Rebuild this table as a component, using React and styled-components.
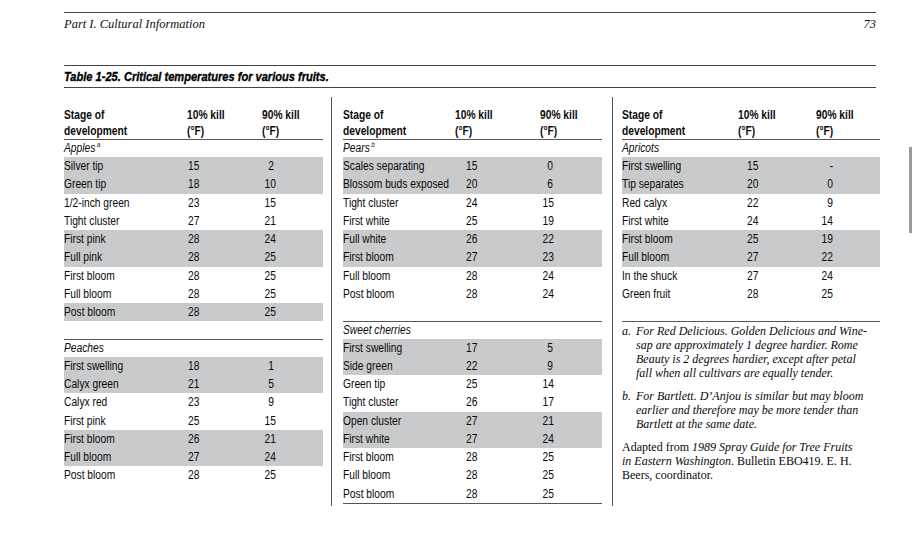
import React from "react";
import styled, { createGlobalStyle } from "styled-components";

const GlobalStyle = createGlobalStyle`
  html, body { margin: 0; padding: 0; background: #fff; }
  body { width: 912px; height: 552px; overflow: hidden; }
`;

const SANS = `"Liberation Sans", Arial, sans-serif`;
const SERIF = `"Liberation Serif", "Times New Roman", serif`;

const apples = [
  ["Silver tip", "15", "2", true],
  ["Green tip", "18", "10", true],
  ["1/2-inch green", "23", "15"],
  ["Tight cluster", "27", "21"],
  ["First pink", "28", "24", true],
  ["Full pink", "28", "25", true],
  ["First bloom", "28", "25"],
  ["Full bloom", "28", "25"],
  ["Post bloom", "28", "25", true],
];
const peaches = [
  ["First swelling", "18", "1", true],
  ["Calyx green", "21", "5", true],
  ["Calyx red", "23", "9"],
  ["First pink", "25", "15"],
  ["First bloom", "26", "21", true],
  ["Full bloom", "27", "24", true],
  ["Post bloom", "28", "25"],
];
const pears = [
  ["Scales separating", "15", "0", true],
  ["Blossom buds exposed", "20", "6", true],
  ["Tight cluster", "24", "15"],
  ["First white", "25", "19"],
  ["Full white", "26", "22", true],
  ["First bloom", "27", "23", true],
  ["Full bloom", "28", "24"],
  ["Post bloom", "28", "24"],
];
const cherries = [
  ["First swelling", "17", "5", true],
  ["Side green", "22", "9", true],
  ["Green tip", "25", "14"],
  ["Tight cluster", "26", "17"],
  ["Open cluster", "27", "21", true],
  ["First white", "27", "24", true],
  ["First bloom", "28", "25"],
  ["Full bloom", "28", "25"],
  ["Post bloom", "28", "25"],
];
const apricots = [
  ["First swelling", "15", "-", true],
  ["Tip separates", "20", "0", true],
  ["Red calyx", "22", "9"],
  ["First white", "24", "14"],
  ["First bloom", "25", "19", true],
  ["Full bloom", "27", "22", true],
  ["In the shuck", "27", "24"],
  ["Green fruit", "28", "25"],
];

const layouts = {
  left: { stage: 123, pct: 75, off10: 1, right90: 12 },
  mid: { stage: 112, pct: 85, off10: 11, right90: 13 },
  right: { stage: 116, pct: 78, off10: 9, right90: 17 },
};

const Page = styled.div`
  position: relative;
  width: 912px;
  height: 552px;
  padding: 12px 0 0 64px;
  box-sizing: border-box;
  color: #111;
`;

const RunningHead = styled.div`
  width: 812px;
  height: 53px;
  border-top: 1px solid #444;
  padding-top: 3px;
  box-sizing: border-box;
  display: flex;
  justify-content: space-between;
  font-family: ${SERIF};
  font-style: italic;
  font-size: 12.5px;
  line-height: 16px;
`;

const TableTitle = styled.div`
  width: 812px;
  border-top: 1px solid #444;
  border-bottom: 1px solid #444;
  height: 23px;
  box-sizing: border-box;
  font-family: ${SANS};
  font-weight: 700;
  font-style: italic;
  font-size: 13.5px;
  line-height: 21px;
  color: #000;
  -webkit-text-stroke: 0.35px #000;
`;

/* condensed face: Liberation Sans squeezed to Arial Narrow proportions */
const Narrow = styled.span`
  display: inline-block;
  white-space: nowrap;
  transform: scaleX(${(p) => p.$k || 0.82});
  transform-origin: ${(p) => p.$origin || "left"} center;
`;

const Columns = styled.div`
  margin-top: 9px;
  display: grid;
  grid-template-columns: 268px 281px 267px;
  width: 816px;
`;

const Column = styled.div`
  padding: 10px ${(p) => p.$pr}px 2px ${(p) => p.$pl}px;
  border-right: ${(p) => (p.$line ? "1px solid #555" : "none")};
  font-family: ${SANS};
  font-size: 12.5px;
  color: #0a0a0a;
`;

const HeadRow = styled.div`
  display: grid;
  grid-template-columns: ${(p) => p.$l.stage}px ${(p) => p.$l.pct}px 1fr;
  border-bottom: 1px solid #555;
  font-weight: 700;
  line-height: 16px;
  div { display: flex; flex-direction: column; }
`;

const GroupLabel = styled.div`
  height: 17px;
  line-height: 17px;
  font-style: italic;
  border-top: ${(p) => (p.$rule ? "1px solid #555" : "none")};
  sup {
    font-size: 7px;
    vertical-align: 5px;
    margin-left: 2px;
    line-height: 0;
  }
`;

const Spacer = styled.div`
  height: 17.5px;
`;

const Row = styled.div`
  display: grid;
  grid-template-columns: ${(p) => p.$l.stage}px ${(p) => p.$l.pct}px 1fr;
  height: 18.25px;
  line-height: 18.25px;
  background: ${(p) => (p.$shade ? "#c8cacb" : "transparent")};
`;

const Kill10 = styled.span`
  padding-left: ${(p) => p.$off}px;
`;

const Kill90 = styled.span`
  display: inline-block;
  width: ${(p) => p.$w}px;
  text-align: right;
`;

const EndRule = styled.div`
  border-top: 1px solid #555;
`;

const Notes = styled.div`
  border-top: 1px solid #555;
  padding-top: 2px;
  font-family: ${SERIF};
  font-size: 12px;
  line-height: 14px;
`;

const Note = styled.div`
  display: flex;
  font-style: italic;
  margin-bottom: 9px;
  span:first-child {
    width: 14px;
    flex: none;
  }
`;

const Source = styled.div`
  i { font-style: italic; }
`;

const ScrollThumb = styled.div`
  position: absolute;
  left: 909px;
  top: 147px;
  width: 3px;
  height: 86px;
  background: #999;
`;

function Head({ l }) {
  return (
    <HeadRow $l={l}>
      <div><Narrow>Stage of</Narrow><Narrow>development</Narrow></div>
      <div><Narrow>10% kill</Narrow><Narrow>(°F)</Narrow></div>
      <div><Narrow>90% kill</Narrow><Narrow>(°F)</Narrow></div>
    </HeadRow>
  );
}

function Rows({ data, l }) {
  return data.map(([stage, a, b, shade], i) => (
    <Row key={i} $l={l} $shade={shade}>
      <span><Narrow>{stage}</Narrow></span>
      <span><Kill10 $off={l.off10}><Narrow>{a}</Narrow></Kill10></span>
      <span><Kill90 $w={l.right90}><Narrow $origin="right">{b}</Narrow></Kill90></span>
    </Row>
  ));
}

export default function App() {
  return (
    <>
      <GlobalStyle />
      <Page>
        <RunningHead>
          <span>Part I. Cultural Information</span>
          <span>73</span>
        </RunningHead>
        <TableTitle>
          <Narrow>Table 1-25. Critical temperatures for various fruits.</Narrow>
        </TableTitle>
        <Columns>
          <Column $pl={0} $pr={8} $line>
            <Head l={layouts.left} />
            <GroupLabel><Narrow>Apples<sup>a</sup></Narrow></GroupLabel>
            <Rows data={apples} l={layouts.left} />
            <Spacer />
            <GroupLabel $rule><Narrow>Peaches</Narrow></GroupLabel>
            <Rows data={peaches} l={layouts.left} />
          </Column>
          <Column $pl={11} $pr={10} $line>
            <Head l={layouts.mid} />
            <GroupLabel><Narrow>Pears<sup>b</sup></Narrow></GroupLabel>
            <Rows data={pears} l={layouts.mid} />
            <Spacer />
            <GroupLabel $rule><Narrow>Sweet cherries</Narrow></GroupLabel>
            <Rows data={cherries} l={layouts.mid} />
            <EndRule />
          </Column>
          <Column $pl={9} $pr={0}>
            <Head l={layouts.right} />
            <GroupLabel><Narrow>Apricots</Narrow></GroupLabel>
            <Rows data={apricots} l={layouts.right} />
            <Spacer />
            <Notes>
              <Note>
                <span>a.</span>
                <span>
                  For Red Delicious. Golden Delicious and Wine-<br />
                  sap are approximately 1 degree hardier. Rome<br />
                  Beauty is 2 degrees hardier, except after petal<br />
                  fall when all cultivars are equally tender.
                </span>
              </Note>
              <Note>
                <span>b.</span>
                <span>
                  For Bartlett. D’Anjou is similar but may bloom<br />
                  earlier and therefore may be more tender than<br />
                  Bartlett at the same date.
                </span>
              </Note>
              <Source>
                Adapted from <i>1989 Spray Guide for Tree Fruits</i><br />
                <i>in Eastern Washington</i>. Bulletin EBO419. E. H.<br />
                Beers, coordinator.
              </Source>
            </Notes>
          </Column>
        </Columns>
        <ScrollThumb />
      </Page>
    </>
  );
}
